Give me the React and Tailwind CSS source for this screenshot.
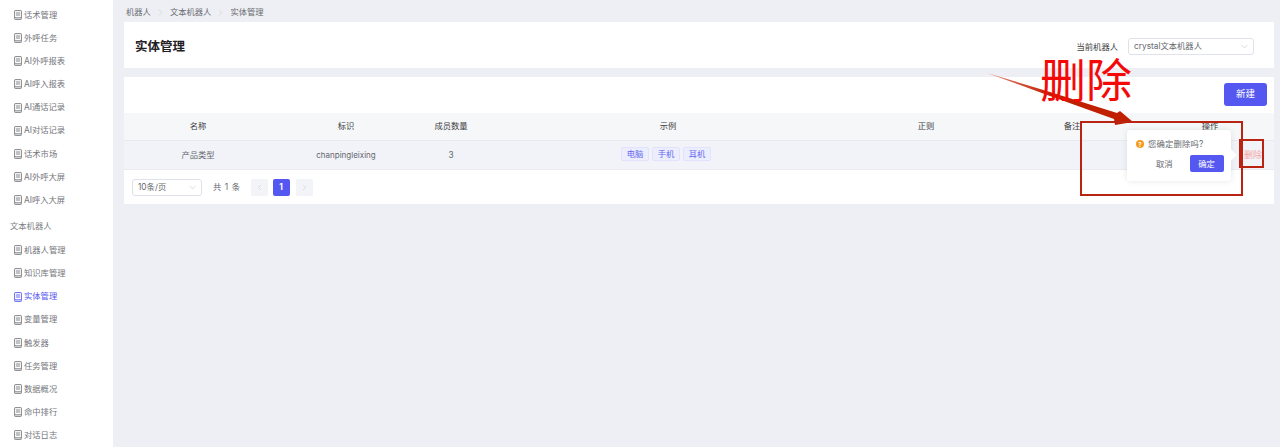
import { ChevronDown, ChevronLeft, ChevronRight } from 'lucide-react';

const groupA = ['话术管理', '外呼任务', 'AI外呼报表', 'AI呼入报表', 'AI通话记录', 'AI对话记录', '话术市场', 'AI外呼大屏', 'AI呼入大屏'];
const groupB = ['机器人管理', '知识库管理', '实体管理', '变量管理', '触发器', '任务管理', '数据概况', '命中排行', '对话日志'];

function DocIcon() {
  return (
    <svg width="8" height="10" viewBox="0 0 8 10" fill="none" stroke="currentColor" strokeWidth="0.9" className="shrink-0">
      <rect x="0.6" y="0.6" width="6.8" height="8.8" rx="0.6" />
      <path d="M2 3h4M2 5h4M1 7.8h6" />
    </svg>
  );
}

function NavItem({ label, active }) {
  return (
    <div className={`flex h-[23.15px] items-center gap-[2px] pl-[14px] ${active ? 'text-[#5558f0]' : 'text-[#74767c]'}`}>
      <DocIcon />
      <span>{label}</span>
    </div>
  );
}

function Sidebar() {
  return (
    <div className="w-[113px] shrink-0 bg-white pt-[3.4px] text-[8.3px]">
      {groupA.map((l) => <NavItem key={l} label={l} />)}
      <div className="flex h-[27px] items-center pl-[10px] pt-[2px] text-[#7d7f85]">文本机器人</div>
      {groupB.map((l) => <NavItem key={l} label={l} active={l === '实体管理'} />)}
    </div>
  );
}

function Breadcrumb() {
  return (
    <div className="flex h-[22px] items-center pl-[2px] pt-[2px] text-[8.3px] text-[#6b6d73]">
      <span>机器人</span>
      <ChevronRight size={11} strokeWidth={1} className="mx-[4px] text-[#c2c4ca]" />
      <span>文本机器人</span>
      <ChevronRight size={11} strokeWidth={1} className="mx-[4px] text-[#c2c4ca]" />
      <span>实体管理</span>
    </div>
  );
}

const cols = 'grid grid-cols-[148px_148px_62px_368px_152px_140px_136px] items-center text-center';

function Table() {
  return (
    <div className="text-[8.3px]">
      <div className={`${cols} h-[28px] border-b border-[#e8eaf0] bg-[#f6f7f9] pb-[1px] text-[#3c3d41]`}>
        <div>名称</div>
        <div>标识</div>
        <div>成员数量</div>
        <div className="pl-[4px]">示例</div>
        <div>正则</div>
        <div>备注</div>
        <div>操作</div>
      </div>
      <div className={`${cols} h-[29px] border-b border-[#e8eaf0] bg-[#f1f3f8] text-[#66686e]`}>
        <div>产品类型</div>
        <div className="text-[8px]">chanpingleixing</div>
        <div>3</div>
        <div className="mb-[2px] flex justify-center gap-[3px]">
          {['电脑', '手机', '耳机'].map((t) => (
            <span key={t} className="flex h-[14px] w-[28px] items-center justify-center rounded-[2px] border border-[#e1e2fb] bg-[#ecedfd] text-[#6467f2]">{t}</span>
          ))}
        </div>
        <div />
        <div />
        <div className="flex justify-end pr-[16px] text-[9px] text-[#f5a3a3]">删除</div>
      </div>
    </div>
  );
}

function Pager() {
  return (
    <div className="flex h-[34px] items-center pl-[8px] text-[8.3px] text-[#66686e]">
      <div className="flex h-[17px] w-[70px] items-center justify-between rounded-[3px] border border-[#dfe2ea] pl-[5px] pr-[3px]">
        <span className="pt-[1px]">10条/页</span>
        <ChevronDown size={11} strokeWidth={1} className="text-[#b0b3ba]" />
      </div>
      <span className="ml-[11px] pt-[1px] tracking-[0.6px]">共 1 条</span>
      <div className="ml-[10px] flex h-[17px] w-[17px] items-center justify-center rounded-[2px] bg-[#f3f4f8] text-[#b0b3ba]">
        <ChevronLeft size={9} strokeWidth={1} />
      </div>
      <div className="ml-[5px] flex h-[17px] w-[17px] items-center justify-center rounded-[2px] bg-[#5558f0] font-bold text-white">1</div>
      <div className="ml-[6px] flex h-[17px] w-[17px] items-center justify-center rounded-[2px] bg-[#f3f4f8] text-[#b0b3ba]">
        <ChevronRight size={9} strokeWidth={1} />
      </div>
    </div>
  );
}

function Popover() {
  return (
    <div className="absolute left-[1127px] top-[130px] h-[51px] w-[104px] rounded-[3px] bg-white pl-[9px] pt-[8px] text-[8.3px] text-[#66686e] shadow-[0_0_6px_rgba(0,0,0,0.1)]">
      <div className="flex items-center gap-[4px]">
        <span className="flex h-[8px] w-[8px] items-center justify-center rounded-full bg-[#f79a1b] text-[6px] font-bold text-white">?</span>
        <span className="tracking-[0.2px]">您确定删除吗?</span>
      </div>
      <div className="mt-[5px] flex items-center">
        <span className="ml-[20px]">取消</span>
        <span className="ml-[17px] flex h-[17px] w-[34px] items-center justify-center rounded-[2px] bg-[#5558f0] text-white">确定</span>
      </div>
      <div className="absolute right-[-4px] top-[21px] h-[8px] w-[8px] rotate-45 bg-white" />
    </div>
  );
}

function Annotations() {
  return (
    <>
      <svg className="absolute left-0 top-0" width="1280" height="447" viewBox="0 0 1280 447">
        <defs>
          <linearGradient id="tail" x1="987" y1="73" x2="1050" y2="95" gradientUnits="userSpaceOnUse">
            <stop offset="0" stopColor="#e58a78" />
            <stop offset="1" stopColor="#c01f00" />
          </linearGradient>
        </defs>
        <polygon points="987,73 1050,92 1117,113 1120,111 1133,122 1115,125 1114,119 1050,96" fill="url(#tail)" />
      </svg>
      <div className="absolute left-[1040px] top-[54px] text-[46px] font-normal leading-[56px] text-[#f50808] font-['Liberation_Serif','Noto_Sans_CJK_SC',serif]">删除</div>
      <div className="absolute left-[1080px] top-[121px] h-[75px] w-[163px] border-2 border-[#b92312]" />
      <div className="absolute left-[1239px] top-[139px] h-[29px] w-[25px] border-2 border-[#b92312]" />
    </>
  );
}

export default function App() {
  return (
    <div className="relative flex h-[447px] w-[1280px] overflow-hidden bg-[#eeeff4] font-['Inter','Noto_Sans_CJK_SC',sans-serif]">
      <Sidebar />
      <div className="w-[1161px] pl-[11px]">
        <Breadcrumb />
        <div className="flex h-[46px] items-center justify-between bg-white pl-[11px] pr-[20px] pt-[3px]">
          <div className="pt-[2px] text-[12.5px] font-bold text-[#1f2024]">实体管理</div>
          <div className="flex items-center text-[8.3px] text-[#66686e]">
            <span className="pt-[1px] text-[#3c3d41]">当前机器人</span>
            <div className="ml-[10px] flex h-[17px] w-[126px] items-center justify-between rounded-[3px] border border-[#dfe2ea] pl-[5px] pr-[3px]">
              <span>crystal文本机器人</span>
              <ChevronDown size={11} strokeWidth={1} className="text-[#b0b3ba]" />
            </div>
          </div>
        </div>
        <div className="mt-[9px] bg-white">
          <div className="flex h-[36px] items-start justify-end pr-[7px] pt-[6px]">
            <div className="flex h-[23px] w-[43px] items-center justify-center rounded-[3px] bg-[#5558f0] text-[9.5px] text-white">新建</div>
          </div>
          <Table />
          <Pager />
        </div>
      </div>
      <Popover />
      <Annotations />
    </div>
  );
}
